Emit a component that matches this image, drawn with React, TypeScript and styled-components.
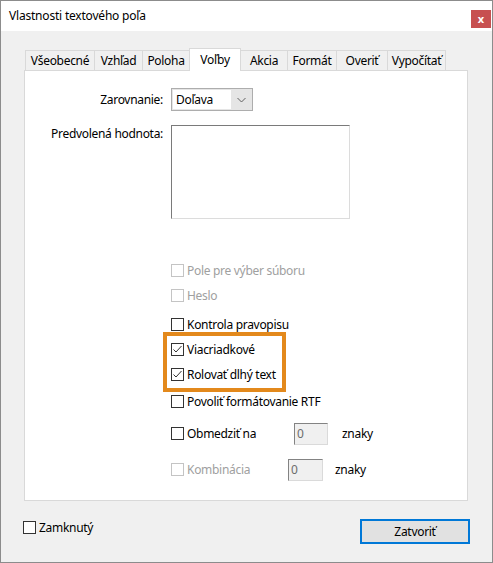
import React from "react";
import styled, { createGlobalStyle } from "styled-components";

const Global = createGlobalStyle`
  html, body { margin: 0; padding: 0; background: #ffffff; }
  * { box-sizing: border-box; }
  body { font-family: "Noto Sans", "Open Sans", sans-serif; font-size: 12px; color: #000; }
`;

const Window = styled.div`
  width: 493px;
  height: 563px;
  border: 1px solid #8c8c8c;
  background: #f0f0f0;
  display: flex;
  flex-direction: column;
`;

const TitleBar = styled.div`
  height: 30px;
  background: #ffffff;
  display: flex;
  align-items: center;
  justify-content: space-between;
  padding-left: 8px;
  padding-right: 1px;
`;

const Title = styled.span`
  font-size: 12px;
  letter-spacing: -0.2px;
  margin-top: -2px;
`;

const CloseButton = styled.div`
  width: 20px;
  height: 18px;
  margin-top: 5px;
  background: #c75050;
  color: #fff;
  font-weight: bold;
  font-size: 11px;
  line-height: 16px;
  display: flex;
  align-items: center;
  justify-content: center;
`;

const Body = styled.div`
  flex: 1;
  display: flex;
  flex-direction: column;
  padding: 17px 24px 0 23px;
`;

const TabRow = styled.div`
  display: flex;
  align-items: flex-end;
  height: 23px;
  padding-left: 1px;
  margin-bottom: -1px;
  position: relative;
  z-index: 1;
`;

const Tab = styled.div<{ $w: number; $active?: boolean }>`
  width: ${(p) => p.$w}px;
  height: ${(p) => (p.$active ? 23 : 21)}px;
  margin-left: -1px;
  border: 1px solid #d9d9d9;
  border-bottom: ${(p) => (p.$active ? "none" : "1px solid #d9d9d9")};
  background: ${(p) => (p.$active ? "#ffffff" : "#f0f0f0")};
  display: flex;
  justify-content: center;
  align-items: ${(p) => (p.$active ? "flex-start" : "center")};
  padding-top: ${(p) => (p.$active ? "2px" : "0")};
  letter-spacing: -0.3px;
  white-space: nowrap;
  &:first-child { margin-left: 0; }
`;

const Panel = styled.div`
  height: 431px;
  background: #ffffff;
  border: 1px solid #d9d9d9;
  padding: 17px 0 0 0;
  display: flex;
  flex-direction: column;
`;

const FormGrid = styled.div`
  display: grid;
  grid-template-columns: 138px 179px;
  column-gap: 8px;
  row-gap: 14px;
  align-items: start;
`;

const Label = styled.div<{ $top: number }>`
  text-align: right;
  letter-spacing: -0.3px;
  padding-top: ${(p) => p.$top}px;
  white-space: nowrap;
`;

const Select = styled.div`
  width: 82px;
  height: 23px;
  border: 1px solid #adadad;
  background: #e5e5e5;
  display: flex;
  align-items: stretch;
  padding: 1px;
`;

const SelectText = styled.div`
  width: 58px;
  background: #ffffff;
  padding-left: 3px;
  display: flex;
  align-items: center;
  letter-spacing: -0.3px;
`;

const SelectArrow = styled.div`
  flex: 1;
  display: flex;
  align-items: center;
  justify-content: center;
`;

const TextArea = styled.div`
  width: 179px;
  height: 94px;
  background: #fff;
  border-top: 1px solid #7a7a7a;
  border-left: 1px solid #7a7a7a;
  border-right: 1px solid #dcdcdc;
  border-bottom: 1px solid #dcdcdc;
`;

const Options = styled.div`
  display: flex;
  flex-direction: column;
  padding-left: 146px;
  margin-top: 45px;
`;

const CheckRow = styled.div<{ $mt: number; $disabled?: boolean }>`
  display: flex;
  align-items: center;
  height: 13px;
  margin-top: ${(p) => p.$mt}px;
  color: ${(p) => (p.$disabled ? "#a0a0a0" : "#000")};
  white-space: nowrap;
`;

const Box = styled.div<{ $disabled?: boolean }>`
  width: 13px;
  height: 13px;
  flex: none;
  border: 1px solid ${(p) => (p.$disabled ? "#c4c4c4" : "#333333")};
  background: #fff;
  display: flex;
  align-items: center;
  justify-content: center;
`;

const CheckText = styled.span<{ $w?: number }>`
  margin-left: 3px;
  letter-spacing: -0.3px;
  ${(p) => (p.$w ? `width: ${p.$w}px;` : "")}
`;

const Highlight = styled.div`
  position: relative;
  width: 107px;
  margin-top: 12px;
  display: flex;
  flex-direction: column;
  &::before {
    content: "";
    position: absolute;
    top: -11px;
    left: -8px;
    right: -8px;
    bottom: -11px;
    border: 4px solid #e3891c;
    pointer-events: none;
  }
`;

const NumInput = styled.div<{ $w: number }>`
  width: ${(p) => p.$w}px;
  height: 22px;
  flex: none;
  background: #f0f0f0;
  border-top: 1px solid #838383;
  border-left: 1px solid #838383;
  border-right: 1px solid #dadada;
  border-bottom: 1px solid #dadada;
  color: #6d6d6d;
  padding-left: 2px;
  display: flex;
  align-items: center;
`;

const Unit = styled.span<{ $ml: number }>`
  margin-left: ${(p) => p.$ml}px;
  color: #000;
  letter-spacing: -0.3px;
`;

const Footer = styled.div`
  display: flex;
  align-items: flex-start;
  justify-content: space-between;
  margin-top: 18px;
  margin-left: -1px;
  margin-right: -2px;
`;

const FooterCheck = styled.div`
  display: flex;
  align-items: center;
  height: 13px;
  margin-top: 2px;
`;

const Button = styled.div`
  width: 110px;
  height: 25px;
  border: 2px solid #0078d7;
  background: #e1e1e1;
  display: flex;
  align-items: center;
  justify-content: center;
  letter-spacing: -0.3px;
`;

const Check = () => (
  <svg width="11" height="11" viewBox="0 0 11 11">
    <polyline points="1.5,5.5 4,8 9.5,2" fill="none" stroke="#333" strokeWidth="1" />
  </svg>
);

const Chevron = () => (
  <svg width="9" height="6" viewBox="0 0 9 6">
    <polyline points="0.5,1 4.5,5 8.5,1" fill="none" stroke="#606060" strokeWidth="1" />
  </svg>
);

const tabs: { label: string; w: number; active?: boolean }[] = [
  { label: "Všeobecné", w: 70 },
  { label: "Vzhľad", w: 49 },
  { label: "Poloha", w: 48 },
  { label: "Voľby", w: 52, active: true },
  { label: "Akcia", w: 48 },
  { label: "Formát", w: 50 },
  { label: "Overiť", w: 52 },
  { label: "Vypočítať", w: 59 },
];

export default function App() {
  return (
    <>
      <Global />
      <Window>
        <TitleBar>
          <Title>Vlastnosti textového poľa</Title>
          <CloseButton>x</CloseButton>
        </TitleBar>
        <Body>
          <TabRow>
            {tabs.map((t) => (
              <Tab key={t.label} $w={t.w} $active={t.active}>
                {t.label}
              </Tab>
            ))}
          </TabRow>
          <Panel>
            <FormGrid>
              <Label $top={3}>Zarovnanie:</Label>
              <Select>
                <SelectText>Doľava</SelectText>
                <SelectArrow>
                  <Chevron />
                </SelectArrow>
              </Select>
              <Label $top={0}>Predvolená hodnota:</Label>
              <TextArea />
            </FormGrid>
            <Options>
              <CheckRow $mt={0} $disabled>
                <Box $disabled />
                <CheckText>Pole pre výber súboru</CheckText>
              </CheckRow>
              <CheckRow $mt={12} $disabled>
                <Box $disabled />
                <CheckText>Heslo</CheckText>
              </CheckRow>
              <CheckRow $mt={16}>
                <Box />
                <CheckText>Kontrola pravopisu</CheckText>
              </CheckRow>
              <Highlight>
                <CheckRow $mt={0}>
                  <Box>
                    <Check />
                  </Box>
                  <CheckText>Viacriadkové</CheckText>
                </CheckRow>
                <CheckRow $mt={12}>
                  <Box>
                    <Check />
                  </Box>
                  <CheckText>Rolovať dlhý text</CheckText>
                </CheckRow>
              </Highlight>
              <CheckRow $mt={14}>
                <Box />
                <CheckText>Povoliť formátovanie RTF</CheckText>
              </CheckRow>
              <CheckRow $mt={19}>
                <Box />
                <CheckText $w={107}>Obmedziť na</CheckText>
                <NumInput $w={34}>0</NumInput>
                <Unit $ml={14}>znaky</Unit>
              </CheckRow>
              <CheckRow $mt={23} $disabled>
                <Box $disabled />
                <CheckText $w={101}>Kombinácia</CheckText>
                <NumInput $w={35}>0</NumInput>
                <Unit $ml={12}>znaky</Unit>
              </CheckRow>
            </Options>
          </Panel>
          <Footer>
            <FooterCheck>
              <Box />
              <CheckText>Zamknutý</CheckText>
            </FooterCheck>
            <Button>Zatvoriť</Button>
          </Footer>
        </Body>
      </Window>
    </>
  );
}
